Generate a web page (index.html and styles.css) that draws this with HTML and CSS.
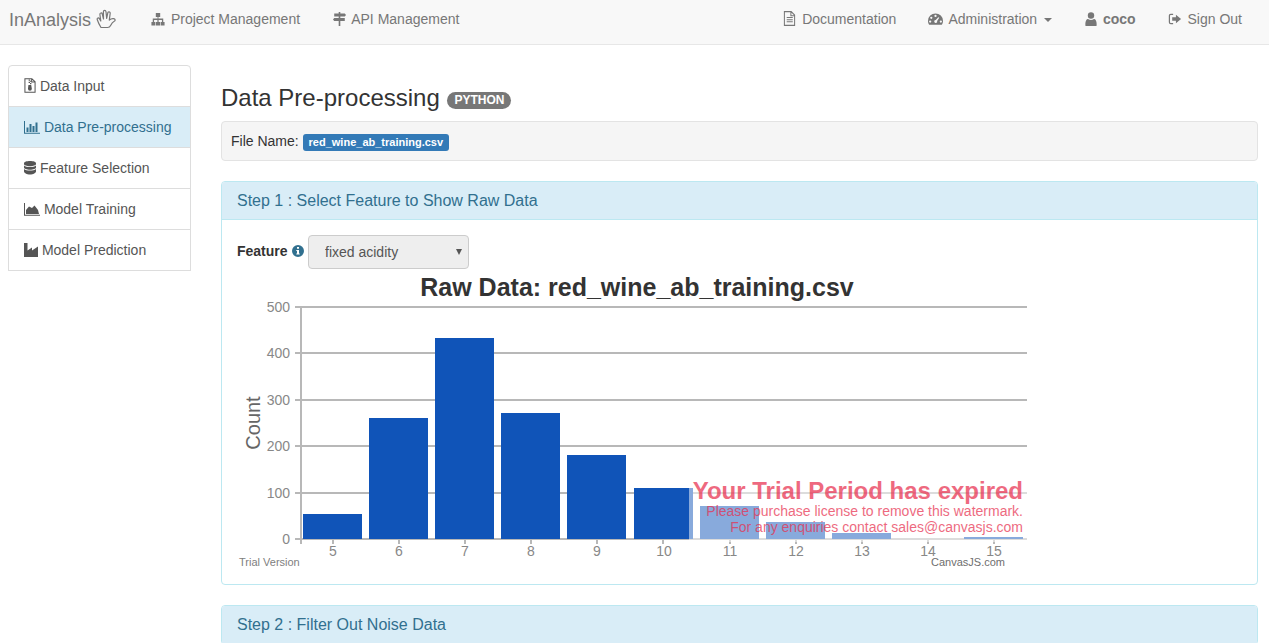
FILE: index.html
```html
<!DOCTYPE html>
<html lang="en">
<head>
    <meta charset="UTF-8">
    <title>InAnalysis</title>
    <link rel="stylesheet" href="styles.css">
</head>
<body>

    <nav class="navbar">
        <a class="brand">InAnalysis
            <svg class="brand-icon" viewBox="0 0 21 20" width="21" height="20"><path d="M5 18.500C3.500 16 2 13 1.200 10.500 .7 9 2.600 8.200 3.400 9.600L4.800 12 3.900 5.500C3.700 3.800 5.900 3.400 6.300 5L7.500 10 7.400 2.800C7.400 1 9.800 1 10 2.800L10.700 9.500 11.800 3.800C12.100 2.200 14.400 2.600 14.200 4.300L13.300 11.200C14.500 10 16 9.400 17.500 9.600 19.500 10 19.600 11.500 18.200 12.200 16.500 13 15.500 14.500 14.600 16.400 14 17.800 13 18.500 11.600 18.500Z" fill="none" stroke="currentColor" stroke-width="1.200" stroke-linejoin="round"/></svg>
        </a>
        <a class="nav-link nav-wide">
            <svg class="ico" viewBox="0 0 16 14" width="14" height="14" preserveAspectRatio="none"><path d="M5.500 1h5v4h-2v1.500H14V10h1.500v3.500h-4.500V10h1.500V8H8.700v2h1.600v3.500H5.700V10h1.600V8H3.500v2H5v3.500H.5V10H2V6.500h5.500V5h-2z"/></svg>
            Project Management</a>
        <a class="nav-link nav-wide">
            <svg class="ico" viewBox="0 0 16 14" width="13" height="14" preserveAspectRatio="none"><path d="M7 0h2v1.500h5.500L16 3l-1.500 1.500H9V6h5.500v3H9v5H7V9H1.500L0 7.500 1.500 6H7V4.500H1.500v-3H7z"/></svg>
            API Management</a>
        <span class="nav-spacer"></span>
        <a class="nav-link">
            <svg class="ico" viewBox="0 0 14 16" width="13" height="15"><path d="M1.500.6h7.300L12.500 4.300v11.100h-11zM8.500 1v4h4M4 7h6.500M4 9.300h6.500M4 11.600h6.500" fill="none" stroke="currentColor" stroke-width="1.100"/></svg>
            Documentation</a>
        <a class="nav-link nav-wide">
            <svg class="ico" viewBox="0 0 16 14" width="15" height="14"><path fill-rule="evenodd" d="M8 1a8 8 0 0 1 8 8c0 1.700-.5 3-1.300 4H1.300C.5 12 0 10.700 0 9a8 8 0 0 1 8-8zM8 2.500a1.200 1.200 0 1 0 0 2.400 1.200 1.200 0 0 0 0-2.400zM3.500 4.500a1.200 1.200 0 1 0 0 2.400 1.200 1.200 0 0 0 0-2.400zM2.300 8.500a1.200 1.200 0 1 0 0 2.400 1.200 1.200 0 0 0 0-2.400zM13.700 8.500a1.200 1.200 0 1 0 0 2.400 1.200 1.200 0 0 0 0-2.400zM11 5L8.300 8A1.600 1.600 0 1 0 9.700 9L12 5.600z"/></svg>
            Administration <span class="caret"></span></a>
        <a class="nav-link">
            <svg class="ico" viewBox="0 0 12 14" width="12" height="14"><circle cx="6" cy="3.500" r="3.200"/><path d="M.5 14c-.6-4 .6-7 2.500-7 1 .8 2 1.100 3 1.100S8 7.800 9 7c1.900 0 3.100 3 2.500 7z"/></svg>
            <b>coco</b></a>
        <a class="nav-link signout">
            <svg class="ico" viewBox="0 0 15 14" width="14" height="14"><path d="M5.500 2H3Q1.500 2 1.500 3.500v7Q1.500 12 3 12h2.500" fill="none" stroke="currentColor" stroke-width="1.300"/><path d="M8.500 2.500L14 7l-5.500 4.500V9H4.500V5h4z"/></svg>
            Sign Out</a>
    </nav>

    <div class="page">
        <div class="sidebar">
            <a class="side-item">
                <svg class="ico" viewBox="0 0 13 16" width="12" height="15"><path d="M1 .6h7.500L12 4v11.400H1zM8.300 1v3.300H12" fill="none" stroke="currentColor" stroke-width="1.100"/><path d="M5 1.500h1.500v1.300H5zM6.500 2.800H8V4H6.500zM5 4h1.500v1.300H5zM6.500 5.300H8v1.300H6.500zM4.800 7.500h3l.7 4a2 2 0 1 1-4.200 0z"/></svg>
                Data Input</a>
            <a class="side-item active">
                <svg class="ico" viewBox="0 0 16 14" width="16" height="14"><path d="M0 1h1v11.800h15v1H0zM2.500 7.500h2v4.500h-2zM5.500 4h2v8h-2zM8.500 6h2v6h-2zM11.500 2.500h2V12h-2z"/></svg>
                Data Pre-processing</a>
            <a class="side-item">
                <svg class="ico" viewBox="0 0 12 14" width="12" height="14"><path d="M6 0c3.300 0 6 .9 6 2.200v.8c0 1.300-2.700 2.200-6 2.200S0 4.300 0 3v-.8C0 .9 2.700 0 6 0zM0 4.500c1.200 1 3.500 1.500 6 1.500s4.800-.5 6-1.500v2c0 1.300-2.700 2.200-6 2.200S0 7.800 0 6.500zM0 8c1.200 1 3.500 1.500 6 1.500S10.800 9 12 8v2.500c0 1.300-2.700 3-6 3s-6-1.700-6-3z"/></svg>
                Feature Selection</a>
            <a class="side-item">
                <svg class="ico" viewBox="0 0 16 14" width="16" height="14"><path d="M0 1h1v11.800h15v1H0zM2 12V8l3-3.500L8 6l2.500-2.500L14 8l1 4z"/></svg>
                Model Training</a>
            <a class="side-item">
                <svg class="ico" viewBox="0 0 14 14" width="14" height="14"><path d="M0 0h3.500v7.500L8 4.500v3l6-4V14H0z"/></svg>
                Model Prediction</a>
        </div>

        <div class="main">
            <h2 class="title">Data Pre-processing <span class="badge">PYTHON</span></h2>
            <div class="well">File Name: <span class="label">red_wine_ab_training.csv</span></div>

            <div class="panel">
                <div class="panel-heading">Step 1 : Select Feature to Show Raw Data</div>
                <div class="panel-body">
                    <div class="feature-row">
                        <label class="feature-label">Feature
                            <svg class="info" viewBox="0 0 12 12" width="12" height="12"><path fill-rule="evenodd" d="M6 0a6 6 0 1 1 0 12A6 6 0 0 1 6 0zM5 2v1.700h2V2zM4.300 5v1.100H5v2.300h-.7v1.100h3.400V8.400H7V5z"/></svg>
                        </label>
                        <div class="select-wrap">
                            <select class="feature-select">
                                <option>fixed acidity</option>
                            </select>
                        </div>
                    </div>
                    <svg class="chart" viewBox="237 269 800 300" width="800" height="300">
                        <text class="chart-title" x="637" y="296" text-anchor="middle">Raw Data: red_wine_ab_training.csv</text>
                        <g class="grid">
                            <path d="M295 307H1027M295 353H1027M295 400H1027M295 446H1027M295 493H1027M295 539H1027M301 306V544"/>
                            <path d="M333 539v5M399 539v5M465 539v5M531 539v5M597 539v5M663 539v5M730 539v5M796 539v5M862 539v5M928 539v5M994 539v5"/>
                        </g>
                        <g class="bars">
                            <rect x="303" y="514" width="59" height="25"/>
                            <rect x="369" y="418" width="59" height="121"/>
                            <rect x="435" y="338" width="59" height="201"/>
                            <rect x="501" y="413" width="59" height="126"/>
                            <rect x="567" y="455" width="59" height="84"/>
                            <rect x="634" y="488" width="59" height="51"/>
                            <rect x="700" y="506" width="59" height="33"/>
                            <rect x="766" y="522" width="59" height="17"/>
                            <rect x="832" y="533" width="59" height="6"/>
                            <rect x="964" y="537" width="59" height="2"/>
                        </g>
                        <g class="axis-y" text-anchor="end">
                            <text x="290" y="312">500</text>
                            <text x="290" y="358">400</text>
                            <text x="290" y="405">300</text>
                            <text x="290" y="451">200</text>
                            <text x="290" y="498">100</text>
                            <text x="290" y="544">0</text>
                        </g>
                        <g class="axis-x" text-anchor="middle">
                            <text x="333" y="556">5</text>
                            <text x="399" y="556">6</text>
                            <text x="465" y="556">7</text>
                            <text x="531" y="556">8</text>
                            <text x="597" y="556">9</text>
                            <text x="664" y="556">10</text>
                            <text x="730" y="556">11</text>
                            <text x="796" y="556">12</text>
                            <text x="862" y="556">13</text>
                            <text x="928" y="556">14</text>
                            <text x="994" y="556">15</text>
                        </g>
                        <text class="axis-title" transform="translate(260 423) rotate(-90)" text-anchor="middle">Count</text>
                        <rect class="veil" x="689" y="480" width="338" height="62"/>
                        <g class="watermark" text-anchor="end">
                            <text class="wm-big" x="1023" y="499">Your Trial Period has expired</text>
                            <text x="1023" y="516">Please purchase license to remove this watermark.</text>
                            <text x="1023" y="532">For any enquiries contact sales@canvasjs.com</text>
                        </g>
                        <text class="credit" x="239" y="566">Trial Version</text>
                        <text class="credit dark" x="931" y="566">CanvasJS.com</text>
                    </svg>
                </div>
            </div>

            <div class="panel">
                <div class="panel-heading">Step 2 : Filter Out Noise Data</div>
            </div>
        </div>
    </div>

</body>
</html>
```

FILE: styles.css
```css
html {
    overflow: hidden;
}
body {
    margin: 0;
    font-family: "Liberation Sans", Arial, sans-serif;
    font-size: 14px;
    line-height: 20px;
    color: #333;
    background-color: #fff;
}
.ico {
    fill: currentColor;
    vertical-align: -2px;
}

/* Barre du haut */
.navbar {
    display: flex;
    align-items: center;
    height: 38px;
    padding: 0 12px 6px 9px;
    background-color: #f8f8f8;
    border-bottom: 1px solid #e7e7e7;
    color: #777;
}
.brand {
    width: 127px;
    font-size: 18px;
}
.brand-icon {
    vertical-align: -3px;
}
.nav-link {
    margin-right: 2px;
    padding: 0 15px;
    white-space: nowrap;
}
.nav-wide {
    margin-right: 3px;
}
.nav-link .ico {
    margin-right: 2px;
}
.signout {
    margin-right: 0;
}
.nav-spacer {
    flex: 1;
}
.caret {
    display: inline-block;
    margin-left: 3px;
    vertical-align: middle;
    border-top: 4px solid;
    border-right: 4px solid transparent;
    border-left: 4px solid transparent;
}

/* Colonnes */
.page {
    display: flex;
    align-items: flex-start;
    padding: 20px 11px 0 8px;
}
.sidebar {
    flex: 0 0 183px;
    margin-right: 30px;
}
.side-item {
    display: block;
    height: 20px;
    margin-bottom: -1px;
    padding: 10px 15px;
    background-color: #fff;
    border: 1px solid #ddd;
    color: #555;
}
.side-item:first-child {
    border-radius: 4px 4px 0 0;
}
.side-item:last-child {
    margin-bottom: 0;
}
.side-item.active {
    background-color: #d9edf7;
    color: #31708f;
}
.main {
    flex: 1;
    min-width: 0;
}

/* Titre et nom de fichier */
.title {
    margin: 20px 0 10px;
    font-size: 24px;
    font-weight: 500;
    line-height: 26px;
}
.badge {
    display: inline-block;
    margin-left: 1px;
    padding: 3px 7px;
    vertical-align: 2px;
    font-size: 12px;
    font-weight: 700;
    line-height: 11px;
    color: #fff;
    background-color: #777;
    border-radius: 10px;
}
.well {
    height: 20px;
    margin-bottom: 20px;
    padding: 9px;
    background-color: #f5f5f5;
    border: 1px solid #e3e3e3;
    border-radius: 4px;
}
.label {
    display: inline-block;
    padding: 3px 6px;
    font-size: 11px;
    font-weight: 700;
    line-height: 11px;
    color: #fff;
    background-color: #337ab7;
    border-radius: 3px;
}

/* Panneaux */
.panel {
    margin-bottom: 20px;
    border: 1px solid #bce8f1;
    border-radius: 4px;
}
.panel-heading {
    padding: 10px 15px;
    font-size: 16px;
    line-height: 17px;
    color: #31708f;
    background-color: #d9edf7;
    border-bottom: 1px solid #bce8f1;
    border-radius: 3px 3px 0 0;
}
.panel-body {
    padding: 15px;
}
.feature-row {
    display: flex;
    align-items: center;
    height: 34px;
}
.feature-label {
    width: 71px;
    padding-bottom: 2px;
    font-weight: 700;
}
.info {
    margin-left: 1px;
    fill: #31708f;
    vertical-align: -1px;
}
.select-wrap {
    position: relative;
}
.select-wrap::after {
    content: "";
    position: absolute;
    top: 14px;
    right: 7px;
    border-top: 6px solid #555;
    border-right: 3px solid transparent;
    border-left: 3px solid transparent;
}
.feature-select {
    display: block;
    width: 161px;
    height: 34px;
    padding: 6px 12px 6px 16px;
    font-family: inherit;
    font-size: 14px;
    color: #555;
    background-color: #eee;
    border: 1px solid #ccc;
    border-radius: 4px;
    appearance: none;
}

/* Graphique */
.chart {
    display: block;
}
.chart text {
    font-family: "Liberation Sans", Arial, sans-serif;
}
.chart-title {
    font-size: 25px;
    font-weight: 700;
    fill: #333;
}
.grid path {
    fill: none;
    stroke: #b8b8b8;
    stroke-width: 2;
}
.bars rect {
    fill: #1054b8;
}
.axis-y,
.axis-x {
    font-size: 14px;
    fill: #888;
}
.axis-title {
    font-size: 20px;
    fill: #666;
}
.veil {
    fill: #fff;
    opacity: .5;
}
.watermark {
    font-size: 14px;
    fill: #e8304f;
    opacity: .72;
}
.wm-big {
    font-size: 24px;
    font-weight: 700;
}
.credit {
    font-size: 11px;
    fill: #808080;
}
.credit.dark {
    fill: #6e6e6e;
}
```
